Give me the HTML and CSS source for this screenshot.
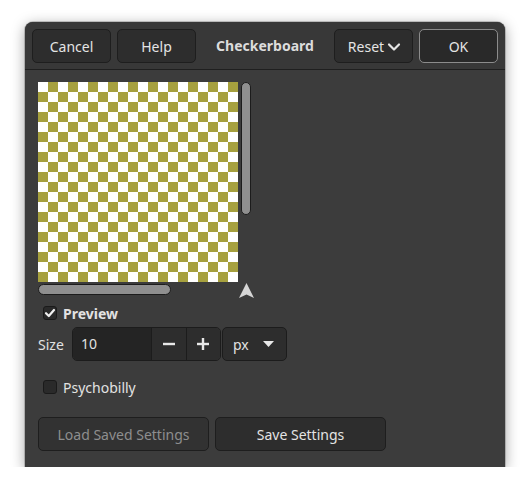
FILE: index.html
```html
<!DOCTYPE html>
<html>
<head>
<meta charset="utf-8">
<link rel="stylesheet" href="styles.css">
</head>
<body>
<div class="window">
  <div class="header">
    <div class="hleft">
      <button class="btn hbtn">Cancel</button>
      <button class="btn hbtn">Help</button>
    </div>
    <div class="title">Checkerboard</div>
    <div class="hright">
      <button class="btn hbtn reset">Reset
        <svg class="chev" width="14" height="10" viewBox="0 0 14 10"><polyline points="2,2.5 7,7.5 12,2.5" fill="none" stroke="#e4e4e4" stroke-width="2.2" stroke-linecap="round" stroke-linejoin="round"/></svg>
      </button>
      <button class="btn hbtn ok">OK</button>
    </div>
  </div>
  <div class="content">
    <div class="preview-area">
      <div class="canvas"></div>
      <div class="vscroll"></div>
    </div>
    <div class="hrow">
      <div class="hscroll"></div>
      <svg class="nav" width="15" height="15" viewBox="0 0 15 15"><path d="M7.5 0 L15 15 L7.5 11.5 L0 15 Z" fill="#d6d6d6"/></svg>
    </div>
    <label class="check-row preview-row">
      <span class="box checked"><svg width="12" height="12" viewBox="0 0 12 12"><polyline points="2,6.2 4.8,9 10,3" fill="none" stroke="#f0f0f0" stroke-width="2.2" stroke-linecap="round" stroke-linejoin="round"/></svg></span>
      <span class="bold">Preview</span>
    </label>
    <div class="size-row">
      <span class="lbl">Size</span>
      <div class="spin">
        <div class="entry">10</div>
        <div class="sbtn"><svg width="14" height="14" viewBox="0 0 14 14"><rect x="1" y="5.8" width="12" height="2.4" fill="#e8e8e8"/></svg></div>
        <div class="sbtn"><svg width="14" height="14" viewBox="0 0 14 14"><rect x="1" y="5.8" width="12" height="2.4" fill="#e8e8e8"/><rect x="5.8" y="1" width="2.4" height="12" fill="#e8e8e8"/></svg></div>
      </div>
      <div class="combo">
        <span>px</span>
        <svg width="11" height="6" viewBox="0 0 11 6"><path d="M0 0 L11 0 L5.5 6 Z" fill="#e8e8e8"/></svg>
      </div>
    </div>
    <label class="check-row psy-row">
      <span class="box"></span>
      <span>Psychobilly</span>
    </label>
    <div class="bottom-row">
      <button class="btn wide insensitive">Load Saved Settings</button>
      <button class="btn wide">Save Settings</button>
    </div>
  </div>
</div>
</body>
</html>
```
FILE: styles.css
```css
html, body {
  margin: 0;
  padding: 0;
  background: #ffffff;
}
body {
  font-family: "Noto Sans", "DejaVu Sans", sans-serif;
  font-size: 14px;
  color: #e2e2e2;
}
.window {
  margin: 22px 0 0 25px;
  width: 480px;
  height: 445px;
  background: #3c3c3c;
  border-radius: 8px 8px 0 0;
  box-shadow: 0 3px 14px rgba(0,0,0,0.38), 0 0 0 1px rgba(0,0,0,0.18);
  overflow: hidden;
  box-sizing: border-box;
}
.header {
  height: 48px;
  box-sizing: border-box;
  border-bottom: 1px solid #1f1f1f;
  background: #383838;
  display: grid;
  grid-template-columns: 1fr auto 1fr;
  align-items: start;
  padding: 7px 7px 0 7px;
}
.hleft, .hright {
  display: flex;
  gap: 6px;
}
.hright { justify-content: flex-end; }
.title {
  font-weight: bold;
  color: #dcdcdc;
  line-height: 34px;
}
.btn {
  font-family: inherit;
  font-size: 14px;
  color: #e4e4e4;
  background: #2d2d2d;
  border: 1px solid #1e1e1e;
  border-radius: 5px;
  height: 34px;
  padding: 0;
  box-sizing: border-box;
  display: flex;
  align-items: center;
  justify-content: center;
}
.hbtn { width: 79px; }
.reset { gap: 3px; padding-left: 2px; }
.chev { margin-top: 1px; }
.ok {
  background: #292929;
  border-color: #8c8c8c;
}
.content {
  padding: 12px 13px 0 13px;
}
.preview-area {
  display: flex;
  align-items: flex-start;
}
.canvas {
  width: 200px;
  height: 200px;
  background: repeating-conic-gradient(#a6a03e 0 25%, #ffffff 0 50%) 0 0 / 20px 20px;
}
.vscroll {
  margin-left: 3px;
  width: 10px;
  height: 133px;
  box-sizing: border-box;
  background: #8f8f8f;
  border: 1px solid #1c1c1c;
  border-radius: 6px;
}
.hrow {
  width: 216px;
  height: 15px;
  margin-top: 1px;
  display: flex;
  justify-content: space-between;
  align-items: flex-start;
}
.hscroll {
  margin-top: 1px;
  width: 133px;
  height: 11px;
  box-sizing: border-box;
  background: #8f8f8f;
  border: 1px solid #1c1c1c;
  border-radius: 6px;
}
.check-row {
  display: flex;
  align-items: center;
  height: 22px;
  gap: 6px;
  padding-left: 5px;
}
.preview-row { margin-top: 4px; }
.box {
  width: 14px;
  height: 14px;
  box-sizing: border-box;
  background: #2a2a2a;
  border: 1px solid #1a1a1a;
  border-radius: 3px;
  display: flex;
  align-items: center;
  justify-content: center;
}
.bold { font-weight: bold; }
.size-row {
  margin-top: 3px;
  height: 34px;
  display: flex;
  align-items: center;
}
.lbl { width: 34px; }
.spin {
  display: flex;
  height: 34px;
  box-sizing: border-box;
  border: 1px solid #1c1c1c;
  border-radius: 5px;
  overflow: hidden;
  width: 149px;
}
.entry {
  width: 78px;
  background: #242424;
  line-height: 32px;
  padding-left: 8px;
  box-sizing: border-box;
}
.sbtn {
  flex: 1;
  background: #2d2d2d;
  border-left: 1px solid #1c1c1c;
  display: flex;
  align-items: center;
  justify-content: center;
}
.combo {
  margin-left: 1px;
  width: 65px;
  height: 34px;
  box-sizing: border-box;
  background: #2d2d2d;
  border: 1px solid #1c1c1c;
  border-radius: 5px;
  display: flex;
  align-items: center;
  justify-content: space-between;
  padding: 0 12px 0 10px;
}
.psy-row { margin-top: 15px; }
.bottom-row {
  margin-top: 19px;
  display: flex;
  gap: 6px;
}
.wide { width: 171px; }
.insensitive {
  color: #8e8e8e;
  background: #323232;
}
```
